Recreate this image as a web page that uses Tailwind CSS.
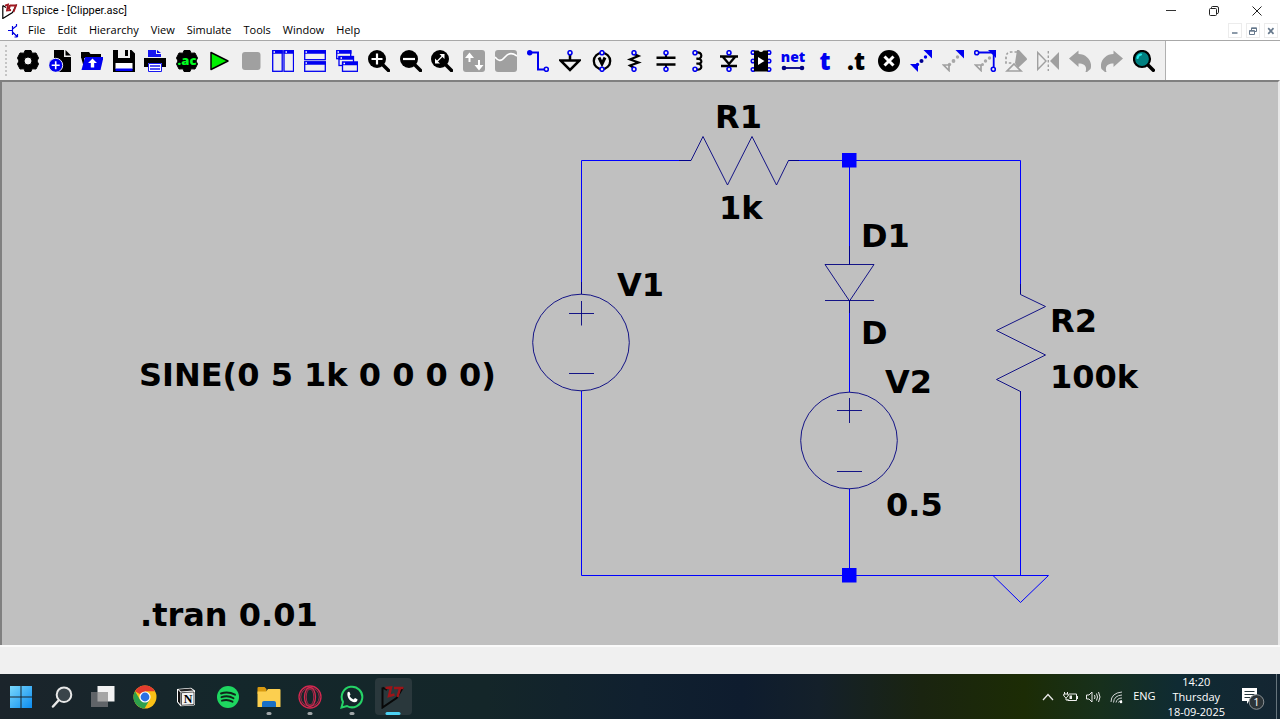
<!DOCTYPE html>
<html lang="en">
<head>
<meta charset="utf-8">
<title>LTspice - [Clipper.asc]</title>
<script src="https://cdn.jsdelivr.net/npm/@tailwindcss/browser@4"></script>
</head>
<body class="flex h-screen flex-col overflow-hidden bg-white font-['Open_Sans',sans-serif] text-[11px] text-black">

<!-- Title bar -->
<header class="flex h-[21px] shrink-0 items-center">
  <svg class="ml-0.5 h-4 w-4 shrink-0" viewBox="0 0 16 16" fill="none" aria-hidden="true">
    <path d="M.8 2.5V15.5L10.5 9.5L14.5 1.5M.8 2.5L4 4.5" stroke="#000" stroke-width="1.2"/>
    <path d="M3 2.5L6 1.5L5 7.5L9 7M8 2.5H14L11.5 9M8 2L7 6" stroke="#a01820" stroke-width="1.8"/>
  </svg>
  <h1 class="ml-1 font-['Roboto',sans-serif] text-[11px] leading-4">LTspice - [Clipper.asc]</h1>
  <div class="ml-auto flex h-full">
    <button aria-label="Minimize" class="grid w-[43px] place-items-center"><svg width="10" height="10" viewBox="0 0 10 10"><path d="M0 4.5H10" stroke="#333"/></svg></button>
    <button aria-label="Restore" class="grid w-[43px] place-items-center"><svg width="10" height="10" viewBox="0 0 10 10" fill="none" stroke="#222"><rect x=".5" y="2.5" width="7" height="7" rx="1"/><path d="M2.5 2.5V1.5Q2.5.5 3.5.5H8Q9.5.5 9.5 2V6.5Q9.5 7.5 8 7.5"/></svg></button>
    <button aria-label="Close" class="mr-0.5 grid w-[43px] place-items-center"><svg width="10" height="10" viewBox="0 0 10 10"><path d="M.5.5L9.5 9.5M9.5.5L.5 9.5" stroke="#222"/></svg></button>
  </div>
</header>

<!-- Menu bar -->
<nav class="flex h-5 shrink-0 items-center border-b border-[#a8a8a8]" aria-label="Menu">
  <svg class="ml-[7px] mr-px h-[14px] w-[14px] shrink-0" viewBox="0 0 14 14" fill="none" stroke="#0000e0" aria-hidden="true"><path stroke-width="1.2" d="M1 6.5H5M5.5 2V11M5.5 5L9.5 2V0M5.5 8L10.5 13M10.5 13H7.5M10.5 13V10"/></svg>
  <button class="px-[6px]">File</button>
  <button class="px-[6px]">Edit</button>
  <button class="px-[6px]">Hierarchy</button>
  <button class="px-[6px]">View</button>
  <button class="px-[6px]">Simulate</button>
  <button class="px-[6px]">Tools</button>
  <button class="px-[6px]">Window</button>
  <button class="px-[6px]">Help</button>
  <div class="ml-auto flex gap-1 pr-0.5">
    <button aria-label="Minimize document" class="grid h-[15px] w-[14px] place-items-center border border-[#ececec]"><svg width="8" height="8" viewBox="0 0 8 8"><path d="M1 6H6.5" stroke="#66788c" stroke-width="1.5"/></svg></button>
    <button aria-label="Restore document" class="grid h-[15px] w-[14px] place-items-center border border-[#ececec]"><svg width="8" height="8" viewBox="0 0 8 8" fill="none" stroke="#66788c"><path d="M2.5 3V.8H7.5V4.5H5.5M2.5 1.5H7.5M.5 3.5H5.5V7.5H.5ZM.5 4.2H5.5"/></svg></button>
    <button aria-label="Close document" class="grid h-[15px] w-[14px] place-items-center border border-[#ececec]"><svg width="8" height="8" viewBox="0 0 8 8"><path d="M1.2 1.2L6.5 6.8M6.5 1.2L1.2 6.8" stroke="#66788c" stroke-width="1.7"/></svg></button>
  </div>
</nav>

<!-- Toolbar -->
<div class="flex h-[39px] shrink-0">
  <div class="flex items-center border-r border-[#b0b0b0] bg-[#f0f0f0] px-[5px]" role="toolbar" aria-label="Main toolbar">
    <span class="h-[31px] w-0 border-l-2 border-dotted border-[#c4c4c4]"></span>
    <div class="ml-[5px] grid w-[1148px] grid-cols-[repeat(36,minmax(0,1fr))] items-center justify-items-center">
      <button aria-label="Settings"><svg width="22" height="22" viewBox="0 0 22 22"><path fill-rule="evenodd" stroke="#000" stroke-linejoin="round" d="M8 .5H14L15 3.2L19 3L21.500 8L20 11L21.500 14L19 19L15 18.8L14 21.500H8L7 18.8L3 19L.5 14L2 11L.5 8L3 3L7 3.2ZM11 7A4 4 0 1 0 11 15A4 4 0 1 0 11 7Z"/></svg></button>
      <button aria-label="New schematic"><svg width="22" height="22" viewBox="0 0 22 22"><path d="M5 0H15V7H22V22H5Z"/><path d="M16.500 0L22 5.500H16.500Z"/><circle cx="6.700" cy="15.300" r="7" fill="#0000f0" stroke="#f0f0f0"/><path d="M6.700 11.300V19.300M2.700 15.300H10.700" stroke="#fff" stroke-width="1.600"/></svg></button>
      <button aria-label="Open"><svg width="22" height="22" viewBox="0 0 22 22"><path d="M0 2H8L9.500 4H20V8H0Z"/><path d="M0 7H3V18Z"/><path d="M4 7H22.500L19.500 20H0.500Z" fill="#0000f0"/><path d="M11.500 8.500L16 13H13.200V17.500H9.800V13H7Z" fill="#fff"/></svg></button>
      <button aria-label="Save"><svg width="22" height="22" viewBox="0 0 22 22"><path d="M0 0H5V8H17V0H18.500L22 3.500V22H0Z"/><path d="M12 0H15V6H12Z"/><path d="M2.500 13H19.500V19H2.500Z" fill="#fff"/><path d="M2.500 18.500H19.500V21H2.500Z" fill="#0000f0"/></svg></button>
      <button aria-label="Print"><svg width="22" height="22" viewBox="0 0 22 22"><path d="M4 0H12V4H17V7H4Z" fill="#1818f0"/><path d="M13 0L17 3H13Z" fill="#0000f0"/><path d="M0 8H22V17H18V13H4V17H0Z"/><path d="M4.500 13.500H17.500V21.500H4.500Z" fill="#fff" stroke="#1818f0"/><path d="M6 16H16M6 19H16" stroke="#1818f0" stroke-width="1.400"/></svg></button>
      <button aria-label="AC analysis"><svg class="overflow-visible" width="22" height="22" viewBox="0 0 22 22"><path stroke="#000" stroke-linejoin="round" d="M8 .5H14L15 3.2L19 3L21.500 8L20 11L21.500 14L19 19L15 18.8L14 21.500H8L7 18.8L3 19L.5 14L2 11L.5 8L3 3L7 3.2Z"/><text x="11" y="15" text-anchor="middle" font-family="Open Sans" font-weight="800" font-size="13" fill="#00ff20">.ac</text></svg></button>
      <button aria-label="Run"><svg width="22" height="22" viewBox="0 0 22 22"><path d="M3 2.500V19.500L20 11Z" fill="#00f000" stroke="#000" stroke-width="1.500" stroke-linejoin="round"/></svg></button>
      <button aria-label="Stop" disabled><svg width="22" height="22" viewBox="0 0 22 22"><rect x="2" y="2" width="18.500" height="18" rx="3" fill="#a0a0a0"/></svg></button>
      <button aria-label="Tile vertically"><svg width="22" height="22" viewBox="0 0 22 22" fill="none" stroke="#0000f0" stroke-width="1.300"><rect x=".7" y=".7" width="9.500" height="20.600"/><rect x="12" y=".7" width="9.500" height="20.600"/><path d="M0 2H10.500M11.500 2H22" stroke-width="3.500"/><path d="M1.500 2H3M13.500 2H15" stroke="#fff" stroke-width="1.500"/></svg></button>
      <button aria-label="Tile horizontally"><svg width="22" height="22" viewBox="0 0 22 22" fill="none" stroke="#0000f0" stroke-width="1.300"><rect x=".7" y=".7" width="20.600" height="9"/><rect x=".7" y="12" width="20.600" height="9.300"/><path d="M0 2H22M0 13H22" stroke-width="3.500"/><path d="M1.500 2H3M1.500 13H3" stroke="#fff" stroke-width="1.500"/></svg></button>
      <button aria-label="Cascade"><svg width="22" height="22" viewBox="0 0 22 22" fill="#f0f0f0" stroke="#0000f0" stroke-width="1.300"><rect x=".7" y=".7" width="14" height="8"/><path d="M0 2H15.500" stroke-width="3.500"/><rect x="3" y="6.500" width="14.500" height="9"/><path d="M2.500 8H18" stroke-width="3.500"/><rect x="6.500" y="12" width="15" height="9.300"/><path d="M6 13.500H22" stroke-width="3.500"/><path d="M1.500 2H3M4.500 8H6M7.500 13.500H9" stroke="#fff"/></svg></button>
      <button aria-label="Zoom in"><svg width="22" height="22" viewBox="0 0 22 22"><circle cx="9" cy="9" r="9"/><path d="M14 14L20.500 20.500" stroke="#000" stroke-width="3.500" stroke-linecap="round"/><path d="M9 3.500V14.500M3.500 9H14.500" stroke="#fff" stroke-width="2.200"/></svg></button>
      <button aria-label="Zoom out"><svg width="22" height="22" viewBox="0 0 22 22"><circle cx="9" cy="9" r="9"/><path d="M14 14L20.500 20.500" stroke="#000" stroke-width="3.500" stroke-linecap="round"/><path d="M3 9H15" stroke="#fff" stroke-width="2.200"/></svg></button>
      <button aria-label="Zoom to fit"><svg width="22" height="22" viewBox="0 0 22 22"><circle cx="9" cy="9" r="9"/><path d="M14 14L20.500 20.500" stroke="#000" stroke-width="3.500" stroke-linecap="round"/><path d="M8.500 4H13.500V9ZM4 8.500V13.500H9Z" fill="#fff"/><path d="M6 11.500L11.500 6" stroke="#fff" stroke-width="1.300"/></svg></button>
      <button aria-label="Autorange" disabled><svg width="22" height="22" viewBox="0 0 22 22"><rect width="22" height="22" rx="3" fill="#a0a0a0"/><path d="M6.500 12V6M16 10V16" stroke="#fff" stroke-width="2"/><path d="M2 8L6.500 2.500L11 8ZM11.500 15L16 20.500L20.500 15Z" fill="#fff"/></svg></button>
      <button aria-label="Waveform" disabled><svg width="22" height="22" viewBox="0 0 22 22"><rect width="22" height="22" rx="3" fill="#a0a0a0"/><path d="M0 7C3 11 6 12 10 7S18 3 22 6" fill="none" stroke="#fff" stroke-width="1.600"/></svg></button>
      <button aria-label="Wire"><svg width="22" height="22" viewBox="0 0 22 22" fill="none" stroke="#0000f0"><circle cx="2.700" cy="2.700" r="2.700" fill="#0000f0" stroke="none"/><path d="M2.500 2.500H11V19.500H17" stroke-width="2"/><circle cx="19.300" cy="19.300" r="2" stroke-width="1.600"/></svg></button>
      <button aria-label="Ground"><svg width="22" height="22" viewBox="0 0 22 22" fill="none"><path d="M11 4V10M1.500 10.500H20.500L11 20Z" stroke="#000" stroke-width="2.500"/><circle cx="11" cy="2.700" r="2" stroke="#0000f0" stroke-width="1.600" fill="#f0f0f0"/></svg></button>
      <button aria-label="Voltage source"><svg width="22" height="22" viewBox="0 0 22 22" fill="none"><circle cx="11" cy="11" r="8.200" stroke="#000" stroke-width="2.300"/><path d="M8 7.500L11 14L14 7.500" stroke="#000" stroke-width="3"/><circle cx="11" cy="2.700" r="2" fill="#f0f0f0" stroke="#0000f0" stroke-width="1.600"/><circle cx="11" cy="19.300" r="2" fill="#f0f0f0" stroke="#0000f0" stroke-width="1.600"/></svg></button>
      <button aria-label="Resistor"><svg width="22" height="22" viewBox="0 0 22 22" fill="none"><path d="M11 4L15.500 6L7 9.500L15.500 12.500L7 15.500L11 18" stroke="#000" stroke-width="2.200"/><circle cx="11" cy="2.700" r="2" fill="#f0f0f0" stroke="#0000f0" stroke-width="1.600"/><circle cx="11" cy="19.300" r="2" fill="#f0f0f0" stroke="#0000f0" stroke-width="1.600"/></svg></button>
      <button aria-label="Capacitor"><svg width="22" height="22" viewBox="0 0 22 22" fill="none"><path d="M11 4V7M11 15V18" stroke="#000" stroke-width="2"/><path d="M1.500 7.700H20.500M1.500 14.500H20.500" stroke="#000" stroke-width="2.500"/><circle cx="11" cy="2.700" r="2" fill="#f0f0f0" stroke="#0000f0" stroke-width="1.600"/><circle cx="11" cy="19.300" r="2" fill="#f0f0f0" stroke="#0000f0" stroke-width="1.600"/></svg></button>
      <button aria-label="Inductor"><svg width="22" height="22" viewBox="0 0 22 22" fill="none"><path d="M9 2.500C16 1 16 10 9.500 8.700C16 8 16 15 9.500 13.500C16 13 16 21 9 19.500" stroke="#000" stroke-width="2.200"/><circle cx="8" cy="2.700" r="2" fill="#f0f0f0" stroke="#0000f0" stroke-width="1.600"/><circle cx="8" cy="19.300" r="2" fill="#f0f0f0" stroke="#0000f0" stroke-width="1.600"/></svg></button>
      <button aria-label="Diode"><svg width="22" height="22" viewBox="0 0 22 22" fill="none"><path d="M2 6.500H20M5 7L11 14L17 7M3 16H19" stroke="#000" stroke-width="2.400"/><circle cx="11" cy="2.700" r="2" fill="#f0f0f0" stroke="#0000f0" stroke-width="1.600"/><circle cx="11" cy="19.300" r="2" fill="#f0f0f0" stroke="#0000f0" stroke-width="1.600"/></svg></button>
      <button aria-label="Component"><svg width="22" height="22" viewBox="0 0 22 22"><g fill="#f0f0f0" stroke="#0000f0" stroke-width="1.500"><circle cx="3" cy="2.500" r="1.800"/><circle cx="3" cy="11" r="1.800"/><circle cx="3" cy="19.500" r="1.800"/><circle cx="19" cy="2.500" r="1.800"/><circle cx="19" cy="11" r="1.800"/><circle cx="19" cy="19.500" r="1.800"/></g><path d="M4 .5H8.500Q11 3.500 13.500.5H18V21.500H4Z"/><path d="M8 7L14.500 11L8 15Z" fill="#fff"/></svg></button>
      <button aria-label="Net label"><svg class="overflow-visible" width="24" height="22" viewBox="0 0 24 22"><text x="12" y="12" text-anchor="middle" font-family="Open Sans" font-weight="800" font-size="14" fill="#0000f0">net</text><path d="M3 18H21" stroke="#000080" stroke-width="1.800"/><circle cx="3" cy="18" r="2.300" fill="#000080"/><circle cx="21" cy="18" r="2.300" fill="#000080"/></svg></button>
      <button aria-label="Text"><svg class="overflow-visible" width="22" height="22" viewBox="0 0 22 22"><text x="11" y="20" text-anchor="middle" font-family="Open Sans" font-weight="800" font-size="24" fill="#0000f0">t</text></svg></button>
      <button aria-label="SPICE directive"><svg class="overflow-visible" width="22" height="22" viewBox="0 0 22 22"><text x="10" y="20" text-anchor="middle" font-family="Open Sans" font-weight="800" font-size="24">.t</text></svg></button>
      <button aria-label="Delete"><svg width="22" height="22" viewBox="0 0 22 22"><circle cx="11" cy="11" r="11"/><path d="M6.500 6.500L15.500 15.500M15.500 6.500L6.500 15.500" stroke="#fff" stroke-width="3"/></svg></button>
      <button aria-label="Move"><svg width="22" height="22" viewBox="0 0 22 22" fill="#0000f0"><path d="M13.500 0H22.500V9ZM0 14H8V22Z"/><circle cx="15.500" cy="7" r="1.700"/><circle cx="11.500" cy="11" r="2" fill="#000090"/><circle cx="7.500" cy="14.500" r="1.700"/></svg></button>
      <button aria-label="Copy"><svg width="22" height="22" viewBox="0 0 22 22"><path d="M13.500 0H22.500V9Z" fill="#0000f0"/><g fill="#a8a8a8"><circle cx="15.500" cy="7" r="1.700"/><circle cx="11.500" cy="11" r="1.900"/><circle cx="7.500" cy="14.500" r="1.700"/></g><path d="M1.500 15H7V20.500Z" fill="none" stroke="#a0a0a0" stroke-width="1.700"/></svg></button>
      <button aria-label="Drag"><svg width="22" height="22" viewBox="0 0 22 22"><g fill="#a8a8a8"><circle cx="15.500" cy="8" r="1.700"/><circle cx="11.500" cy="11" r="1.700"/><circle cx="8.500" cy="14.500" r="1.500"/></g><path d="M1.500 15H7V20.500Z" fill="none" stroke="#a0a0a0" stroke-width="1.700"/><path d="M14 0H22V8Z" fill="#0000f0"/><path d="M4 2.500H19.700V17" fill="none" stroke="#0000f0" stroke-width="1.800"/><circle cx="2.700" cy="2.700" r="2" fill="#f0f0f0" stroke="#0000f0" stroke-width="1.600"/><circle cx="19.300" cy="19.300" r="2" fill="#f0f0f0" stroke="#0000f0" stroke-width="1.600"/></svg></button>
      <button aria-label="Rotate" disabled><svg width="22" height="22" viewBox="0 0 22 22" fill="none" stroke="#a0a0a0"><path d="M12 2H6Q1 2 1 8V13H8" stroke-width="1.700" stroke-dasharray="2.500 2"/><path d="M12 0H14L22.500 9L13 18L10 13Z" fill="#a0a0a0" stroke="none"/><path d="M2 21H16L9 14Z" stroke-width="1.700" fill="#f0f0f0"/></svg></button>
      <button aria-label="Mirror" disabled><svg width="22" height="22" viewBox="0 0 22 22" fill="none" stroke="#a0a0a0" stroke-width="1.400"><path d="M.7 2.500V19.500L9 11Z"/><path d="M22 2V20L13 11Z" fill="#a0a0a0" stroke="none"/><path d="M11.300 1V21" stroke-dasharray="2.500 2"/></svg></button>
      <button aria-label="Undo" disabled><svg width="22" height="22" viewBox="0 0 22 22" fill="#a0a0a0"><path d="M0 8.500L9.500.5V4C18 4 24 12 21.500 19L18 22L16.500 22C18.500 16 15 13.500 9.500 13.500V17Z"/></svg></button>
      <button aria-label="Redo" disabled><svg width="22" height="22" viewBox="0 0 22 22" fill="#a0a0a0"><path d="M22 8.500L12.500.5V4C4 4-2 12 .5 19L4 22H5.500C3.500 16 7 13.500 12.500 13.500V17Z"/></svg></button>
      <button aria-label="Find"><svg width="22" height="22" viewBox="0 0 22 22"><path d="M14 14L20.300 20.300" stroke="#000" stroke-width="3.500" stroke-linecap="round"/><circle cx="9" cy="9" r="8" fill="#008080" stroke="#000" stroke-width="2.200"/><path d="M4.500 8Q5 5 8 4.500" fill="none" stroke="#20e8e8" stroke-width="2.200" stroke-linecap="round"/></svg></button>
    </div>
  </div>
</div>

<!-- Schematic -->
<main class="min-h-0 flex-1 overflow-hidden border-x-2 border-t-2 border-t-[#808080] border-r-[#e8e8e8] border-l-[#808080] bg-[#c0c0c0]">
  <svg class="block h-full w-full" role="img" aria-label="Clipper schematic">
    <g transform="translate(-2 -82)">
      <g fill="none" stroke="#0000ff">
        <path d="M581.5 294V160.500H691M788.500 160.500H1020.500V294M849.500 160.500V264M849.500 301V392M849.500 489V575.500M1020.500 391V575.500M581.500 391V575.500H993"/>
        <path d="M993 575.500H1048.500L1020.500 602.500Z"/>
      </g>
      <g fill="none" stroke="#00007f" stroke-width="0.900">
        <path d="M679 160.500H691L703 136.500L727.500 185L752 136.500L776.500 185L788.500 160.500H799"/>
        <path d="M1020.500 284V294.500L1045.500 306.500L996.500 330.500L1045.500 355L996.500 379.500L1020.500 391.500V400"/>
        <path d="M849.500 246V264.500M825 264.500H874L849.500 301ZM825 300.500H874M849.500 301V313"/>
        <circle cx="581" cy="342.500" r="48.300"/><path d="M569 313.500H594M581.500 301V325.500M569 373.500H594M581.500 282V294"/>
        <circle cx="849" cy="440.500" r="48.300"/><path d="M837 410.500H862M849.500 398V423M837 471.500H862"/>
      </g>
      <path d="M842 153H856.500V167.500H842ZM842 568H856.500V582.500H842Z" fill="#0000ff"/>
      <g font-family="DejaVu Sans, sans-serif" font-weight="700" font-size="32">
        <text x="715" y="128">R1</text>
        <text x="719" y="219">1k</text>
        <text x="617" y="296">V1</text>
        <text x="139" y="386">SINE(0 5 1k 0 0 0 0)</text>
        <text x="140" y="626">.tran 0.01</text>
        <text x="861" y="247">D1</text>
        <text x="861" y="344">D</text>
        <text x="885" y="393">V2</text>
        <text x="886" y="516">0.5</text>
        <text x="1050" y="332">R2</text>
        <text x="1050" y="388">100k</text>
      </g>
    </g>
  </svg>
</main>

<!-- Status bar -->
<div class="h-[29px] shrink-0 border-t-2 border-[#fafafa] bg-[#f0f0f0]" role="status"></div>

<!-- Taskbar -->
<footer class="flex h-[45px] shrink-0 items-center bg-[linear-gradient(90deg,#1b242b_0%,#14272b_18%,#142629_38%,#10202f_50%,#0e1c2e_58%,#14202a_64%,#1a2410_72%,#1c2c05_80%,#17301c_86%,#0f2b33_92%,#142532_100%)]">
  <nav class="grid h-full w-[414px] grid-cols-10" aria-label="Apps">
    <button aria-label="Start" class="grid place-items-center"><svg width="22" height="22" viewBox="0 0 22 22"><defs><linearGradient id="win" x1="0" y1="0" x2="1" y2="1"><stop stop-color="#7ad8fc"/><stop offset="1" stop-color="#0c8cf0"/></linearGradient></defs><path d="M0 0H10.500V10.500H0ZM11.500 0H22V10.500H11.500ZM0 11.500H10.500V22H0ZM11.500 11.500H22V22H11.500Z" fill="url(#win)"/></svg></button>
    <button aria-label="Search" class="grid place-items-center"><svg width="22" height="22" viewBox="0 0 22 22"><path d="M7 15L2 20.500" stroke="#e8e8e8" stroke-width="2.500" stroke-linecap="round"/><circle cx="13" cy="8.700" r="7.300" fill="#3a444a" stroke="#e8e8e8" stroke-width="2"/></svg></button>
    <button aria-label="Task view" class="grid place-items-center"><svg width="24" height="22" viewBox="0 0 24 22"><rect x="6.500" y="0" width="17" height="15.500" fill="#f2f2f2"/><rect x="0" y="6" width="17" height="15" fill="#606468"/><rect x="6.500" y="6" width="10.500" height="9.500" fill="#a5a5a5"/></svg></button>
    <button aria-label="Chrome" class="grid place-items-center"><svg width="24" height="24" viewBox="0 0 24 24"><circle cx="12" cy="12" r="11.500" fill="#fbc116"/><path d="M12 12L2 6.300A11.500 11.500 0 0 1 22 6.300H12Z" fill="#e33b2e"/><path d="M2 6.300A11.500 11.500 0 0 0 11.500 23.500L16.500 15L12 12L7 14.800Z" fill="#2da04c"/><circle cx="12" cy="12" r="5.600" fill="#fff"/><circle cx="12" cy="12" r="4.400" fill="#2b70e4"/></svg></button>
    <button aria-label="Notion" class="grid place-items-center"><svg width="20" height="20" viewBox="0 0 20 20"><path d="M1 2L15 .7L19 3.500V17.500L18 18.500L4.500 19.300L1 15Z" fill="#fff"/><path d="M2 3L4.500 5.500V17.800L2 14.500Z" fill="#111"/><path d="M2.500 2.600L14.500 1.600L17.500 3.600L5 4.500Z" fill="#222"/><path d="M5.500 5.700L18 5V17.500L5.500 18.300Z" fill="#f4f4f4" stroke="#111" stroke-width=".7"/><text x="12" y="16" text-anchor="middle" font-family="Liberation Serif" font-weight="700" font-size="12">N</text></svg></button>
    <button aria-label="Spotify" class="grid place-items-center"><svg width="22" height="22" viewBox="0 0 22 22"><circle cx="11" cy="11" r="11" fill="#1ed760"/><path d="M4 7.500Q11 5 18 8.700M4.500 11.200Q11 9 16.500 12.300M5 14.700Q10.500 13 15.500 15.700" fill="none" stroke="#10241a" stroke-width="1.900" stroke-linecap="round"/></svg></button>
    <button aria-label="File Explorer" class="relative grid place-items-center"><svg width="24" height="22" viewBox="0 0 24 22"><path d="M.5 2Q.5 1 1.500 1H7.500L9.500 3V8H.5Z" fill="#d99a10"/><path d="M.5 5.500H9L11 3H22.500Q23.500 3 23.500 4V21H.5Z" fill="#fccf4f"/><path d="M5 21V17Q5 15 7 15H17Q19 15 19 17V21Z" fill="#1b70c5"/></svg><span class="absolute bottom-1 left-1/2 h-[3px] w-[5px] -translate-x-1/2 rounded-full bg-[#a0a6a8]"></span></button>
    <button aria-label="Opera GX" class="relative grid place-items-center"><svg width="24" height="24" viewBox="0 0 24 24" fill="none" stroke="#d42850"><circle cx="12" cy="12" r="11" stroke-width="1.300"/><circle cx="12" cy="12" r="9.300" stroke-width=".8"/><ellipse cx="12" cy="12" rx="5.500" ry="9.500" stroke-width="1.300"/><ellipse cx="12" cy="12" rx="3.800" ry="8" stroke-width=".8"/></svg><span class="absolute bottom-1 left-1/2 h-[3px] w-[5px] -translate-x-1/2 rounded-full bg-[#a0a6a8]"></span></button>
    <button aria-label="WhatsApp" class="relative grid place-items-center"><svg width="24" height="24" viewBox="0 0 24 24"><path d="M1.500 22.500L3 17A10.300 10.300 0 1 1 7 21Z" fill="none" stroke="#25d366" stroke-width="2"/><path d="M7.500 7.500Q8.500 6.500 9.500 7L10.500 9.500L9.500 11Q11 13.500 13.500 14.500L15 13L17.500 14.200Q17.500 17 14.500 17.300C10.500 17 6.500 12.500 7.500 7.500Z" fill="#fff"/></svg><span class="absolute bottom-1 left-1/2 h-[3px] w-[5px] -translate-x-1/2 rounded-full bg-[#a0a6a8]"></span></button>
    <button aria-label="LTspice" class="relative mx-0.5 my-1 grid place-items-center rounded bg-[#2a383c]"><svg width="24" height="24" viewBox="0 0 24 24" fill="none"><path d="M1.500 2.500V22.500L15.500 13L22 2.500M1.500 2.500L6 5" stroke="#080808" stroke-width="2"/><path d="M4.500 3L10 2.500L8 11L13.500 9.500M13 3H22.500M19 3.500L16.500 12" stroke="#9c1418" stroke-width="2.500"/></svg><span class="absolute bottom-0 left-1/2 h-[3px] w-[15px] -translate-x-1/2 rounded-full bg-[#4cd2f4]"></span></button>
  </nav>
  <div class="ml-auto flex h-full items-center text-white">
    <button aria-label="Show hidden icons" class="mr-[9px]"><svg width="12" height="8" viewBox="0 0 12 8"><path d="M1 7L6 1.500L11 7" fill="none" stroke="#e8e8e8" stroke-width="1.300"/></svg></button>
    <svg width="16" height="12" viewBox="0 0 16 12" fill="none" stroke="#f0f0f0" class="mr-[7px]" aria-label="Battery"><path d="M6 3H13.500V9.500H5V8M14.500 5V8M1.500 1V3M4.500 1V3M.8 3H5.200V5L3.500 6.500H2.500L.8 5ZM3 6.500V9H5"/><path d="M6.500 4.500H9V8H6.500Z" fill="#f0f0f0" stroke="none"/></svg>
    <svg width="16" height="12" viewBox="0 0 16 12" fill="none" stroke="#e8e8e8" class="mr-2" aria-label="Volume"><path d="M.5 4H3L6 1V11L3 8H.5ZM8.500 4Q9.500 6 8.500 8M10.500 2.500Q12.500 6 10.500 9.500M12.500 1Q15.500 6 12.500 11"/></svg>
    <svg width="14" height="14" viewBox="0 0 14 14" fill="none" stroke="#d0d4d4" class="mr-[9px]" aria-label="Wi-Fi"><path d="M1 12Q1 3 12 2M3.500 12.500Q4 5.500 12 5M6 12.500Q7 8 12 8M8.500 12.500Q9 10.500 12 10.500" /><circle cx="11" cy="12" r="1.300" fill="#fff" stroke="none"/></svg>
    <button>ENG</button>
    <button class="ml-3 text-center leading-[15px]">14:20<br>Thursday<br>18-09-2025</button>
    <button aria-label="Notifications" class="ml-4 h-7 w-6"><svg width="24" height="28" viewBox="0 0 24 28"><path d="M1 5H16V18H8L6 21V18H1Z" fill="#fff"/><path d="M3.500 8.500H13.500M3.500 11.500H13.500M3.500 14.500H9" stroke="#24363c" stroke-width="1.200"/><circle cx="15.500" cy="19" r="7.300" fill="#2c3438" stroke="#8a9094"/><text x="15.500" y="23" text-anchor="middle" font-family="Open Sans" font-size="11" fill="#fff">1</text></svg></button>
    <span class="mr-[3px] ml-[11px] h-full w-px bg-[#66747c]"></span>
  </div>
</footer>
</body>
</html>
